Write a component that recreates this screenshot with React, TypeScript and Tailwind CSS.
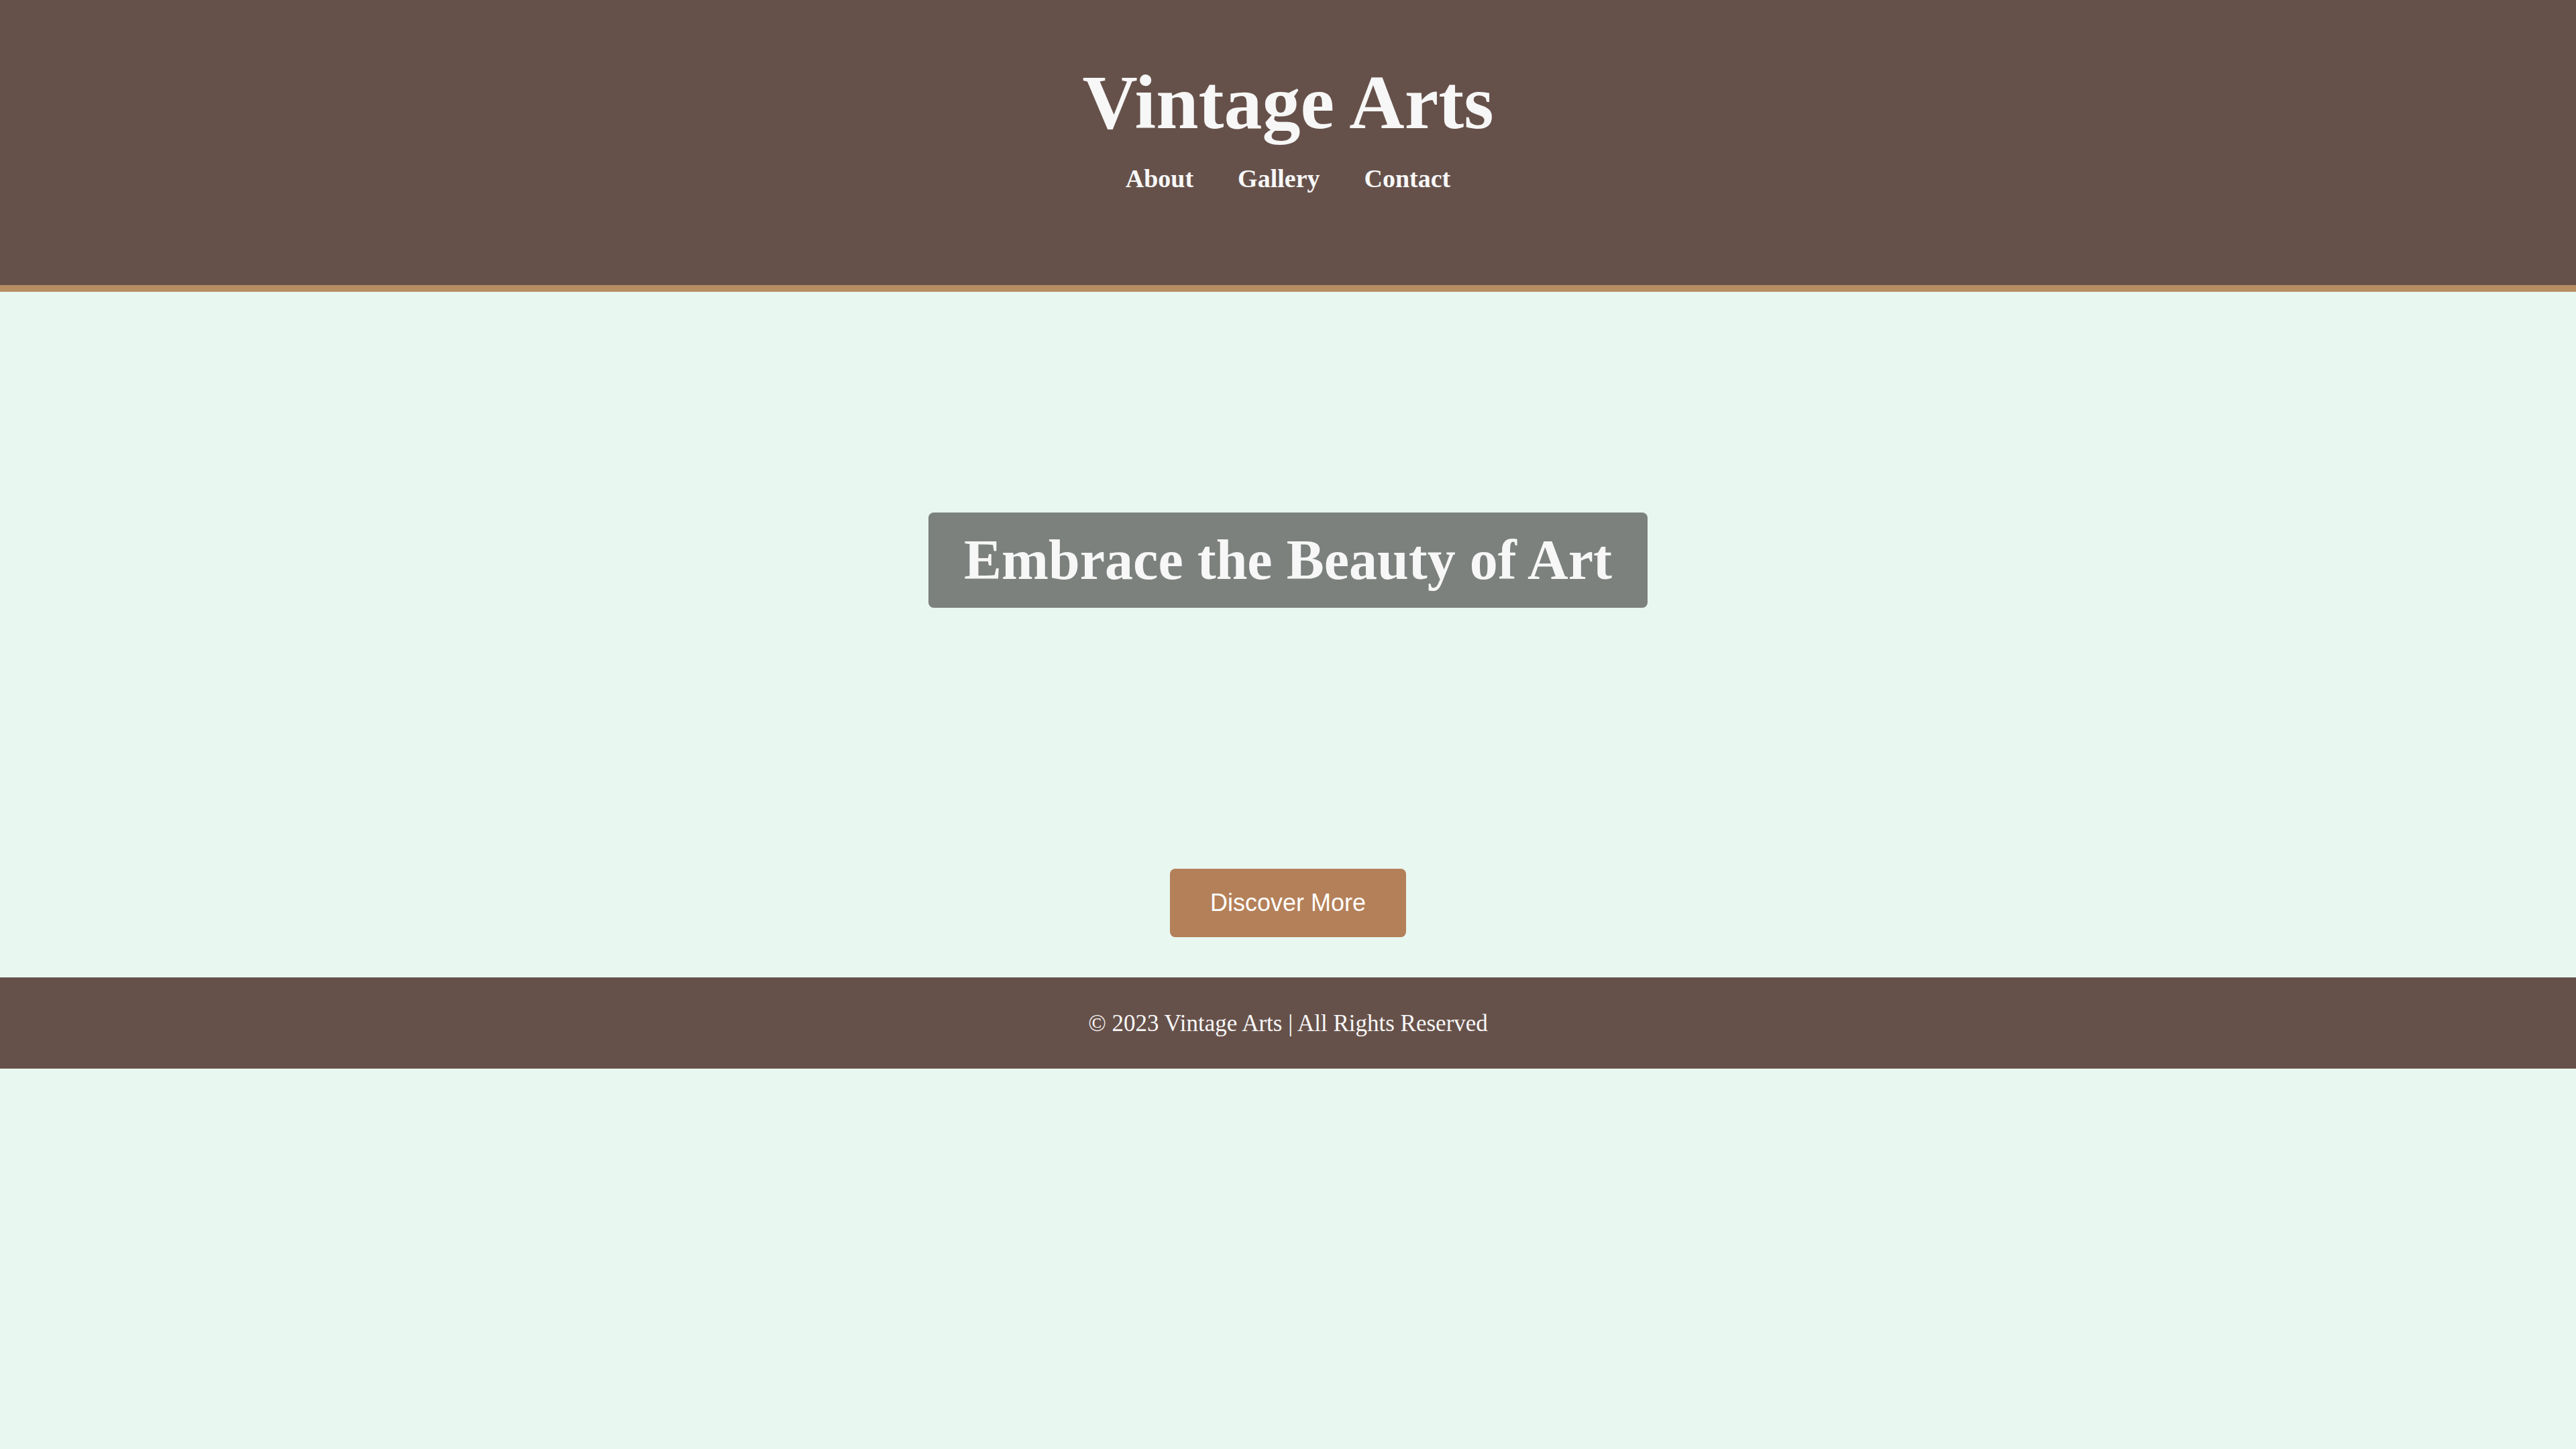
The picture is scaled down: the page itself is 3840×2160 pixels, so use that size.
const serif = "font-['Liberation_Serif','Times_New_Roman',serif]";

const navLinks = ["About", "Gallery", "Contact"];

export default function App() {
  return (
    <div className={`min-h-screen bg-[#e8f7f0] ${serif}`}>
      {/* Header */}
      <header className="bg-[#66514a] border-b-[10px] border-[#b88d64] pt-[96px] pb-[140px] flex flex-col items-center">
        <h1 className="text-[114px] leading-none font-bold text-[#f7f7f7]">Vintage Arts</h1>
        <nav className="mt-[37px] flex gap-[66px]">
          {navLinks.map((link) => (
            <a key={link} href="#" className="text-[38px] leading-none font-bold text-[#f7f7f7]">
              {link}
            </a>
          ))}
        </nav>
      </header>

      {/* Hero */}
      <main className="flex flex-col items-center pt-[329px] pb-[60px]">
        <h2 className="bg-[#7c817e] rounded-lg px-[53px] py-[29px] text-[84px] leading-none font-bold text-[#f7f7f7]">
          Embrace the Beauty of Art
        </h2>
        <button className="mt-[389px] bg-[#b48059] rounded-lg px-[60px] py-[31px] text-[36px] leading-[40px] text-white font-['Liberation_Sans',Arial,sans-serif]">
          Discover More
        </button>
      </main>

      {/* Footer */}
      <footer className="bg-[#66514a] h-[136px] flex items-center justify-center">
        <p className="text-[35px] leading-none text-[#f7f7f7]">© 2023 Vintage Arts | All Rights Reserved</p>
      </footer>
    </div>
  );
}
